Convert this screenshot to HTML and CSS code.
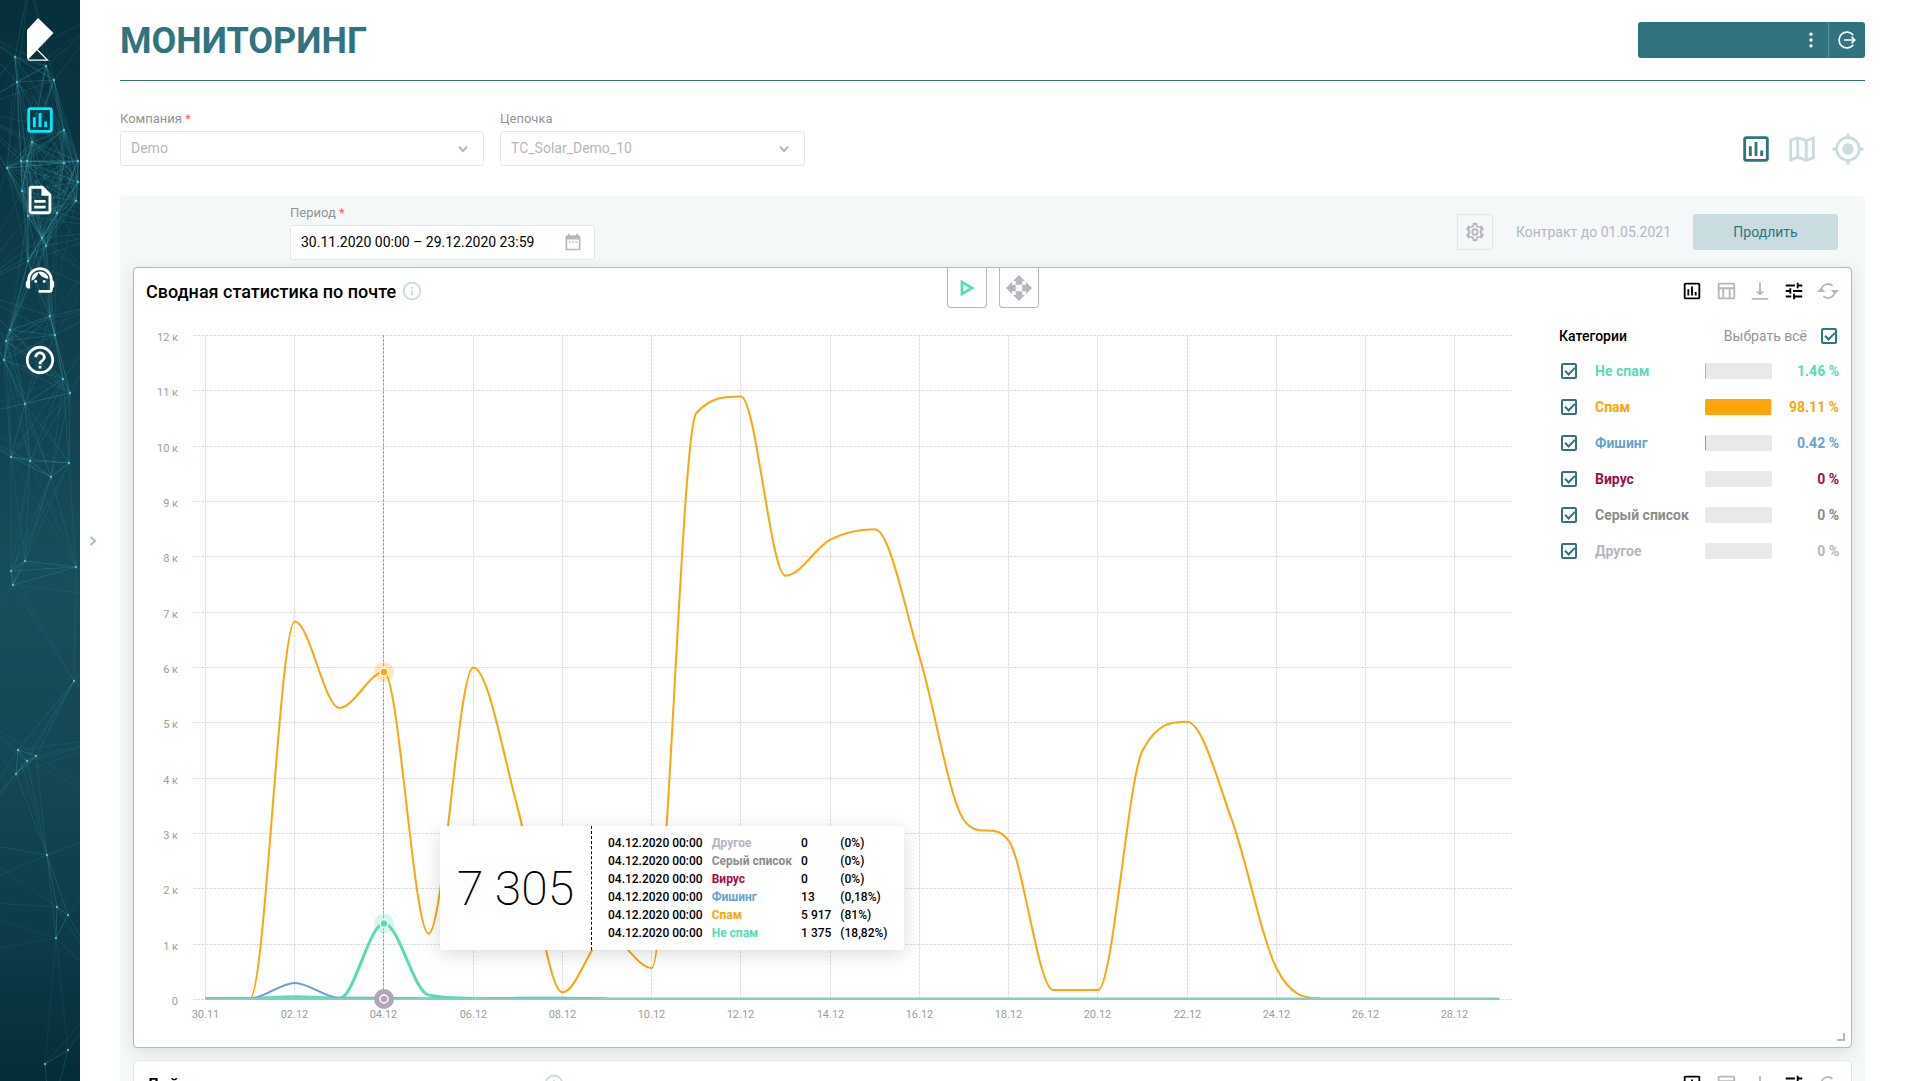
FILE: index.html
```html
<!DOCTYPE html>
<html lang="ru">
<head>
    <meta charset="UTF-8">
    <meta name="viewport" content="width=device-width, initial-scale=1.0">
    <title>Мониторинг</title>
    <link rel="stylesheet" href="styles.css">
</head>
<body>
    <!-- Icons -->
    <svg class="sprite" aria-hidden="true">
        <symbol id="i-chart" viewBox="0 0 24 24"><path d="M9 17H7v-7h2v7zm4 0h-2V7h2v10zm4 0h-2v-4h2v4zm2 2H5V5h14v14zm0-16H5c-1.100 0-2 .9-2 2v14c0 1.100.9 2 2 2h14c1.100 0 2-.9 2-2V5c0-1.100-.9-2-2-2z"/></symbol>
        <symbol id="i-doc" viewBox="0 0 24 24"><path d="M8 16h8v2H8zm0-4h8v2H8zm6-10H6c-1.100 0-2 .9-2 2v16c0 1.100.89 2 1.990 2H18c1.100 0 2-.9 2-2V8l-6-6zm4 18H6V4h7v5h5v11z"/></symbol>
        <symbol id="i-support" viewBox="0 0 24 24"><path d="M21 12.220C21 6.730 16.740 3 12 3c-4.690 0-9 3.650-9 9.280-.6.340-1 .980-1 1.720v2c0 1.100.9 2 2 2h1v-6.100c0-3.870 3.130-7 7-7s7 3.130 7 7V19h-8v2h8c1.100 0 2-.9 2-2v-1.220c.590-.310 1-.920 1-1.640v-2.300c0-.7-.410-1.310-1-1.620z"/><circle cx="9" cy="13" r="1"/><circle cx="15" cy="13" r="1"/><path d="M18 11.030A6.040 6.040 0 0 0 12.050 6c-3.030 0-6.290 2.510-6.030 6.450a8.075 8.075 0 0 0 4.860-5.890c1.310 2.630 4 4.440 7.120 4.470z"/></symbol>
        <symbol id="i-help" viewBox="0 0 24 24"><path d="M11 18h2v-2h-2v2zm1-16C6.480 2 2 6.480 2 12s4.480 10 10 10 10-4.480 10-10S17.520 2 12 2zm0 18c-4.410 0-8-3.590-8-8s3.590-8 8-8 8 3.590 8 8-3.590 8-8 8zm0-14c-2.210 0-4 1.790-4 4h2c0-1.100.9-2 2-2s2 .9 2 2c0 2-3 1.750-3 5h2c0-2.250 3-2.500 3-5 0-2.210-1.790-4-4-4z"/></symbol>
        <symbol id="i-map" viewBox="0 0 24 24"><path d="M20.500 3l-.16.030L15 5.100 9 3 3.360 4.900c-.21.070-.36.250-.36.480V20.500c0 .28.220.5.500.5l.16-.03L9 18.900l6 2.100 5.640-1.900c.21-.07.360-.25.360-.48V3.500c0-.28-.22-.5-.5-.5zM10 5.470l4 1.400v11.660l-4-1.400V5.470zm-5 .99l3-1.010v11.700l-3 1.160V6.460zm14 11.080l-3 1.010V6.860l3-1.160v11.840z"/></symbol>
        <symbol id="i-target" viewBox="0 0 24 24"><path d="M12 8c-2.210 0-4 1.790-4 4s1.790 4 4 4 4-1.790 4-4-1.790-4-4-4zm8.940 3A8.994 8.994 0 0 0 13 3.060V1h-2v2.060A8.994 8.994 0 0 0 3.060 11H1v2h2.060A8.994 8.994 0 0 0 11 20.940V23h2v-2.060A8.994 8.994 0 0 0 20.940 13H23v-2h-2.060zM12 19c-3.870 0-7-3.130-7-7s3.130-7 7-7 7 3.130 7 7-3.130 7-7 7z"/></symbol>
        <symbol id="i-more" viewBox="0 0 24 24"><circle cx="12" cy="5" r="2"/><circle cx="12" cy="12" r="2"/><circle cx="12" cy="19" r="2"/></symbol>
        <symbol id="i-exit" viewBox="0 0 24 24"><path d="M19.500 6.200A9.500 9.500 0 1 0 19.500 17.800M8.500 12H21M17.500 8.200L21.300 12l-3.800 3.800" fill="none" stroke="currentColor" stroke-width="2"/></symbol>
        <symbol id="i-down" viewBox="0 0 24 24"><path d="M5 8l7 7.500L19 8" fill="none" stroke="currentColor" stroke-width="3.500"/></symbol>
        <symbol id="i-date" viewBox="0 0 24 24"><path d="M19 4h-1V2h-2v2H8V2H6v2H5c-1.110 0-2 .9-2 2v14c0 1.100.89 2 2 2h14c1.100 0 2-.9 2-2V6c0-1.100-.9-2-2-2zm0 16H5V9h14v11zM9 13H7v-2h2v2zm4 0h-2v-2h2v2zm4 0h-2v-2h2v2z"/></symbol>
        <symbol id="i-gear" viewBox="0 0 24 24"><path d="M19.430 12.980c.04-.32.070-.64.070-.98s-.03-.66-.07-.98l2.110-1.650c.19-.15.240-.42.120-.64l-2-3.460a.5.5 0 0 0-.61-.22l-2.490 1c-.52-.4-1.080-.73-1.690-.98l-.38-2.650A.488.488 0 0 0 14 2h-4c-.25 0-.46.180-.49.420l-.38 2.650c-.61.250-1.170.59-1.690.98l-2.490-1a.5.5 0 0 0-.61.220l-2 3.460c-.13.220-.07.490.12.640l2.110 1.650c-.04.320-.07.650-.07.980s.03.660.07.980l-2.110 1.650c-.19.150-.24.420-.12.640l2 3.460a.5.5 0 0 0 .61.220l2.490-1c.52.400 1.080.73 1.690.98l.38 2.650c.03.240.24.420.49.420h4c.25 0 .46-.18.490-.42l.38-2.650c.61-.25 1.170-.59 1.690-.98l2.490 1a.5.5 0 0 0 .61-.22l2-3.460c.12-.22.070-.49-.12-.64l-2.110-1.650zM17.300 13.600l.9 1.500-1.100 1.900-1.800-.6-1.800 1.100-.5 2h-2l-.5-2-1.800-1.100-1.800.6-1.100-1.900.9-1.500v-3.200l-.9-1.500 1.100-1.900 1.800.6 1.800-1.100.5-2h2l.5 2 1.800 1.100 1.800-.6 1.100 1.900-.9 1.500zM12 8a4 4 0 1 0 0 8 4 4 0 0 0 0-8zm0 6a2 2 0 1 1 0-4 2 2 0 0 1 0 4z" fill-rule="evenodd"/></symbol>
        <symbol id="i-info" viewBox="0 0 24 24"><path d="M11 7h2v2h-2zm0 4h2v6h-2zm1-10C5.920 1 1 5.920 1 12s4.920 11 11 11 11-4.920 11-11S18.080 1 12 1zm0 20a9 9 0 1 1 0-18 9 9 0 0 1 0 18z"/></symbol>
        <symbol id="i-play" viewBox="0 0 24 24"><path d="M6.500 5.500v13l11-6.500z" fill="none" stroke="currentColor" stroke-width="3"/></symbol>
        <symbol id="i-move" viewBox="0 0 24 24"><path d="M12 0l5.500 5.500H15V9H9V5.500H6.500zM12 24l5.500-5.500H15V15H9v3.500H6.500zM0 12l5.500-5.500V9H9v6H5.500v2.500zM24 12l-5.500-5.500V9H15v6h3.500v2.500z"/></symbol>
        <symbol id="i-table" viewBox="0 0 24 24"><path d="M20 3H5c-1.100 0-2 .9-2 2v14c0 1.100.9 2 2 2h15c1.100 0 2-.9 2-2V5c0-1.100-.9-2-2-2zm0 2v3H5V5h15zm-5 14h-5v-9h5v9zM5 10h3v9H5v-9zm12 9v-9h3v9h-3z"/></symbol>
        <symbol id="i-load" viewBox="0 0 24 24"><path d="M13 12.500h3.500L12 17l-4.500-4.500H11V3h2zM3 19.500h18v2H3z"/></symbol>
        <symbol id="i-tune" viewBox="0 0 24 24"><path d="M3 17v2h6v-2H3zM3 5v2h10V5H3zm10 16v-2h8v-2h-8v-2h-2v6h2zM7 9v2H3v2h4v2h2V9H7zm14 4v-2H11v2h10zm-6-4h2V7h4V5h-4V3h-2v6z"/></symbol>
        <symbol id="i-sync" viewBox="0 0 24 24"><path d="M4.500 12A7.500 7.500 0 0 1 17 6.400M19.500 12A7.500 7.500 0 0 1 7 17.600" fill="none" stroke="currentColor" stroke-width="2"/><path d="M0 13h9L4.500 8.500zM15 11h9l-4.500 4.500z" transform="rotate(0 12 12)"/></symbol>
    </svg>

    <div class="layout">
        <aside class="sidebar">
            <svg class="network" id="network" viewBox="0 0 80 1081" preserveAspectRatio="xMidYMin slice" aria-hidden="true"></svg>
            <a class="logo" href="#" aria-label="Главная">
                <svg viewBox="0 0 27 43"><path d="M11 0L26.500 15 2 40.500H0V12z" fill="#fff"/><path d="M9.500 31L20.500 42.200H2L.7 40.500" fill="none" stroke="#fff" stroke-width="1.200"/></svg>
            </a>
            <nav class="menu">
                <a class="active" href="#" aria-label="Мониторинг"><svg><use href="#i-chart"/></svg></a>
                <a href="#" aria-label="Отчёты"><svg><use href="#i-doc"/></svg></a>
                <a href="#" aria-label="Поддержка"><svg><use href="#i-support"/></svg></a>
                <a href="#" aria-label="Помощь"><svg><use href="#i-help"/></svg></a>
            </nav>
        </aside>

        <div class="expand">
            <button type="button" aria-label="Развернуть меню">
                <svg viewBox="0 0 8 10"><path d="M1.500 1L6 5 1.500 9" fill="none" stroke="currentColor" stroke-width="2"/></svg>
            </button>
        </div>

        <main class="content">
            <header class="header">
                <h1>МОНИТОРИНГ</h1>
                <div class="user">
                    <button class="user-menu" type="button" aria-label="Меню пользователя"><svg><use href="#i-more"/></svg></button>
                    <button class="user-exit" type="button" aria-label="Выйти"><svg><use href="#i-exit"/></svg></button>
                </div>
            </header>

            <div class="filters">
                <div class="field company">
                    <label for="company">Компания <i>*</i></label>
                    <div class="control">
                        <select id="company"><option>Demo</option></select>
                        <svg class="arrow"><use href="#i-down"/></svg>
                    </div>
                </div>
                <div class="field chain">
                    <label for="chain">Цепочка</label>
                    <div class="control">
                        <select id="chain"><option>TC_Solar_Demo_10</option></select>
                        <svg class="arrow"><use href="#i-down"/></svg>
                    </div>
                </div>
                <div class="views">
                    <button class="active" type="button" aria-label="Графики"><svg><use href="#i-chart"/></svg></button>
                    <button type="button" aria-label="Карта"><svg><use href="#i-map"/></svg></button>
                    <button type="button" aria-label="Цель"><svg><use href="#i-target"/></svg></button>
                </div>
            </div>

            <section class="panel">
                <div class="toolbar">
                    <div class="field period">
                        <label for="period">Период <i>*</i></label>
                        <div class="control">
                            <input id="period" type="text" value="30.11.2020 00:00 – 29.12.2020 23:59">
                            <svg class="calendar"><use href="#i-date"/></svg>
                        </div>
                    </div>
                    <div class="contract">
                        <button class="settings" type="button" aria-label="Настройки"><svg><use href="#i-gear"/></svg></button>
                        <span>Контракт до 01.05.2021</span>
                        <button class="prolong" type="button">Продлить</button>
                    </div>
                </div>

                <article class="card selected">
                    <div class="tabs">
                        <button class="play" type="button" aria-label="Запустить"><svg><use href="#i-play"/></svg></button>
                        <button type="button" aria-label="Переместить"><svg><use href="#i-move"/></svg></button>
                    </div>
                    <div class="card-header">
                        <h2>Сводная статистика по почте</h2>
                        <svg class="info"><use href="#i-info"/></svg>
                        <div class="tools">
                            <button class="on" type="button" aria-label="График"><svg><use href="#i-chart"/></svg></button>
                            <button type="button" aria-label="Таблица"><svg><use href="#i-table"/></svg></button>
                            <button type="button" aria-label="Скачать"><svg><use href="#i-load"/></svg></button>
                            <button class="on" type="button" aria-label="Фильтры"><svg><use href="#i-tune"/></svg></button>
                            <button type="button" aria-label="Обновить"><svg><use href="#i-sync"/></svg></button>
                        </div>
                    </div>
                    <div class="card-body">
                        <div class="chart">
                            <svg id="chart" viewBox="0 0 1366 715"></svg>
                            <div class="tooltip">
                                <div class="total">7 305</div>
                                <table>
                                    <tbody>
                                        <tr><td>04.12.2020 00:00</td><td class="other">Другое</td><td>0</td><td>(0%)</td></tr>
                                        <tr><td>04.12.2020 00:00</td><td class="grey">Серый список</td><td>0</td><td>(0%)</td></tr>
                                        <tr><td>04.12.2020 00:00</td><td class="virus">Вирус</td><td>0</td><td>(0%)</td></tr>
                                        <tr><td>04.12.2020 00:00</td><td class="phishing">Фишинг</td><td>13</td><td>(0,18%)</td></tr>
                                        <tr><td>04.12.2020 00:00</td><td class="spam">Спам</td><td>5 917</td><td>(81%)</td></tr>
                                        <tr><td>04.12.2020 00:00</td><td class="ham">Не спам</td><td>1 375</td><td>(18,82%)</td></tr>
                                    </tbody>
                                </table>
                            </div>
                        </div>
                        <div class="legend">
                            <div class="legend-header">
                                <h3>Категории</h3>
                                <label for="all">Выбрать всё</label>
                                <input id="all" type="checkbox" checked>
                            </div>
                            <ul>
                                <li class="ham"><input id="c1" type="checkbox" checked><label for="c1">Не спам</label><span class="bar"><b style="width: 1.46%"></b></span><span class="value">1.46 %</span></li>
                                <li class="spam"><input id="c2" type="checkbox" checked><label for="c2">Спам</label><span class="bar"><b style="width: 98.11%"></b></span><span class="value">98.11 %</span></li>
                                <li class="phishing"><input id="c3" type="checkbox" checked><label for="c3">Фишинг</label><span class="bar"><b style="width: 0.42%"></b></span><span class="value">0.42 %</span></li>
                                <li class="virus"><input id="c4" type="checkbox" checked><label for="c4">Вирус</label><span class="bar"></span><span class="value">0 %</span></li>
                                <li class="grey"><input id="c5" type="checkbox" checked><label for="c5">Серый список</label><span class="bar"></span><span class="value">0 %</span></li>
                                <li class="other"><input id="c6" type="checkbox" checked><label for="c6">Другое</label><span class="bar"></span><span class="value">0 %</span></li>
                            </ul>
                        </div>
                    </div>
                    <span class="resize"></span>
                </article>

                <article class="card">
                    <div class="card-header">
                        <h2>Действия над письмами на этапах их анализа</h2>
                        <svg class="info"><use href="#i-info"/></svg>
                        <div class="tools">
                            <button class="on" type="button" aria-label="График"><svg><use href="#i-chart"/></svg></button>
                            <button type="button" aria-label="Таблица"><svg><use href="#i-table"/></svg></button>
                            <button type="button" aria-label="Скачать"><svg><use href="#i-load"/></svg></button>
                            <button class="on" type="button" aria-label="Фильтры"><svg><use href="#i-tune"/></svg></button>
                            <button type="button" aria-label="Обновить"><svg><use href="#i-sync"/></svg></button>
                        </div>
                    </div>
                </article>
            </section>
        </main>
    </div>

    <script src="script.js"></script>
</body>
</html>
```
FILE: styles.css
```css
* {
    box-sizing: border-box;
}

body {
    margin: 0;
    height: 100vh;
    overflow: hidden;
    font-family: Roboto, "Noto Sans", sans-serif;
    font-size: 14px;
    color: #000;
    background-color: #fff;
}

h1, h2, h3, ul {
    margin: 0;
    padding: 0;
}

button, input, select {
    font: inherit;
    color: inherit;
    margin: 0;
}

button {
    display: flex;
    align-items: center;
    justify-content: center;
    padding: 0;
    border: none;
    background: none;
    cursor: pointer;
}

svg {
    display: block;
    fill: currentColor;
}

.sprite {
    position: absolute;
    width: 0;
    height: 0;
}

.layout {
    display: flex;
    height: 100vh;
}

/* Sidebar */
.sidebar {
    position: relative;
    flex: none;
    width: 80px;
    overflow: hidden;
    color: #fff;
    background: linear-gradient(to bottom, #062f3b 0%, #0b3845 18%, #114352 38%, #184e5b 54%, #144654 72%, #0c3a47 88%, #042c37 100%);
}

.network {
    position: absolute;
    top: 0;
    left: 0;
    width: 100%;
    height: 100%;
}

.logo {
    position: relative;
    display: flex;
    justify-content: center;
    padding: 18px 0 19px;
}

.logo svg {
    width: 27px;
    height: 43px;
}

.menu {
    position: relative;
}

.menu a {
    display: flex;
    align-items: center;
    justify-content: center;
    height: 80px;
    color: #fff;
}

.menu a.active {
    color: #00eaff;
}

.menu svg {
    width: 34px;
    height: 34px;
}

.expand {
    display: flex;
    flex: none;
    align-items: center;
    width: 40px;
    padding-left: 9px;
    color: #9dc0c5;
}

.expand svg {
    width: 8px;
    height: 10px;
}

/* Header */
.content {
    flex: 1;
    min-width: 0;
    padding-right: 58px;
}

.header {
    display: flex;
    align-items: center;
    justify-content: space-between;
    height: 81px;
    border-bottom: 1px solid #31737f;
}

.header h1 {
    padding-top: 2px;
    font-size: 36px;
    line-height: 40px;
    font-weight: 700;
    color: #31737f;
}

.user {
    display: flex;
    width: 227px;
    height: 36px;
    border-radius: 3px;
    color: #fff;
    background-color: #31737f;
}

.user svg {
    width: 20px;
    height: 20px;
}

.user-menu {
    flex: 1;
    justify-content: flex-end;
    padding-right: 7px;
}

.user-exit {
    width: 37px;
    border-left: 1px solid #5a8f98;
}

/* Filters */
.filters {
    display: flex;
    gap: 16px;
    align-items: flex-end;
    padding: 30px 0;
}

.field {
    display: flex;
    flex-direction: column;
    gap: 4px;
}

.field label {
    font-size: 13px;
    line-height: 16px;
    color: #929496;
}

.field label i {
    font-style: normal;
    color: #ff5c5c;
}

.company {
    width: 364px;
}

.chain,
.period {
    width: 305px;
}

.control {
    position: relative;
}

.control select,
.control input {
    display: block;
    appearance: none;
    width: 100%;
    height: 35px;
    padding: 0 10px 1px;
    border: 1px solid #e5e6e8;
    border-radius: 3px;
    outline: none;
    background-color: #fff;
}

.control select {
    color: #b6b6be;
}

.arrow,
.calendar {
    position: absolute;
    pointer-events: none;
    color: #b6b6be;
}

.arrow {
    top: 11px;
    right: 14px;
    width: 14px;
    height: 14px;
}

.calendar {
    top: 7px;
    right: 12px;
    width: 20px;
    height: 20px;
}

.views {
    display: flex;
    gap: 12px;
    margin-left: auto;
}

.views button {
    width: 34px;
    height: 34px;
    color: #c9dcdf;
}

.views button.active {
    color: #31737f;
}

.views svg {
    width: 34px;
    height: 34px;
}

/* Panel */
.panel {
    padding: 0 13px;
    border-radius: 4px;
    background-color: #f4f8f9;
}

.toolbar {
    display: flex;
    align-items: center;
    justify-content: space-between;
    height: 71px;
    padding: 0 14px 0 157px;
}

.period {
    align-self: flex-end;
    padding-bottom: 7px;
}

.contract {
    display: flex;
    align-items: center;
    color: #b6b6be;
}

.settings {
    width: 36px;
    height: 36px;
    border: 1px solid #e5e6e8;
    border-radius: 2px;
}

.settings svg {
    width: 22px;
    height: 22px;
}

.contract span {
    margin: 0 22px 0 23px;
}

.prolong {
    width: 145px;
    height: 36px;
    border-radius: 3px;
    color: #31737f;
    background-color: #c9dcdf;
}

/* Cards */
.card {
    position: relative;
    margin-bottom: 12px;
    padding: 0 12px;
    border: 1px solid #e2e4e6;
    border-radius: 4px;
    background-color: #fff;
}

.card.selected {
    padding-bottom: 12px;
    border-color: #b5b6be;
    box-shadow: 0 4px 16px rgba(0, 0, 0, 0.1);
}

.card-header {
    display: flex;
    align-items: center;
    height: 52px;
    padding-bottom: 6px;
}

.card-header h2 {
    padding-top: 2px;
    font-size: 18px;
    line-height: 24px;
    font-weight: 500;
}

.info {
    width: 20px;
    height: 20px;
    margin-left: 6px;
    color: #c9dcdf;
}

.tools {
    display: flex;
    gap: 12px;
    margin-left: auto;
    color: #b6b6c0;
}

.tools .on {
    color: #000;
}

.tools svg {
    width: 22px;
    height: 22px;
}

.tabs {
    position: absolute;
    top: 0;
    left: 0;
    right: 0;
    display: flex;
    justify-content: center;
    gap: 12px;
}

.tabs button {
    width: 40px;
    height: 40px;
    border: 1px solid #b5b6be;
    border-top: none;
    border-radius: 0 0 4px 4px;
    color: #b5b6be;
}

.tabs svg {
    width: 26px;
    height: 26px;
}

.tabs .play {
    color: #59dbb6;
}

.tabs .play svg {
    width: 22px;
    height: 22px;
}

.card-body {
    display: flex;
    gap: 47px;
}

.resize {
    position: absolute;
    right: 6px;
    bottom: 6px;
    width: 8px;
    height: 8px;
    border-right: 2px solid #b5b6be;
    border-bottom: 2px solid #b5b6be;
}

/* Chart */
.chart {
    position: relative;
    flex: 1;
    min-width: 0;
}

#chart {
    width: 100%;
    height: auto;
    overflow: visible;
}

#chart text {
    font-size: 11px;
    fill: #9c9ea0;
}

#chart .x-label {
    text-anchor: middle;
}

#chart .y-label {
    text-anchor: end;
}

.grid {
    stroke: #dcdee2;
    stroke-dasharray: 3 1;
}

.cursor {
    stroke: #a3a4ab;
    stroke-dasharray: 3 1;
}

.tooltip {
    position: absolute;
    top: 506px;
    left: 294px;
    display: flex;
    height: 124px;
    border-radius: 4px;
    background-color: #fff;
    box-shadow: 0 4px 20px rgba(0, 0, 0, 0.15);
}

.total {
    display: flex;
    align-items: center;
    justify-content: center;
    width: 152px;
    font-size: 48px;
    font-weight: 200;
    border-right: 1px dashed #000;
}

.tooltip table {
    align-self: center;
    margin: 0 16px;
    border-collapse: collapse;
    font-size: 12px;
    line-height: 18px;
    font-weight: 500;
    white-space: nowrap;
}

.tooltip td {
    padding: 0 9px 0 0;
}

.tooltip td:last-child {
    padding-right: 0;
}

.tooltip td[class] {
    font-weight: 700;
}

/* Legend */
.legend {
    width: 280px;
    flex: none;
}

.legend-header {
    display: flex;
    align-items: center;
    height: 32px;
    margin-bottom: 1px;
    padding-right: 2px;
}

.legend h3 {
    flex: 1;
    font-size: 14px;
    font-weight: 500;
}

.legend-header label {
    margin-right: 14px;
    color: #929496;
}

.legend ul {
    list-style: none;
}

.legend li {
    display: flex;
    align-items: center;
    height: 36px;
    padding-left: 2px;
    font-weight: 700;
}

.legend li label {
    flex: 1;
    margin-left: 18px;
}

.legend input {
    appearance: none;
    position: relative;
    width: 16px;
    height: 16px;
    border: 2px solid #31737f;
    border-radius: 2px;
    background-color: #fff;
}

.legend input:checked::after {
    content: "";
    position: absolute;
    top: 2px;
    left: 2px;
    width: 8px;
    height: 4px;
    border-left: 2px solid #31737f;
    border-bottom: 2px solid #31737f;
    transform: rotate(-45deg);
}

.bar {
    width: 67px;
    height: 16px;
    border-radius: 2px;
    overflow: hidden;
    background-color: #e8e9ea;
}

.bar b {
    display: block;
    min-width: 1px;
    height: 100%;
    background-color: currentColor;
}

.value {
    width: 67px;
    text-align: right;
}

.ham { color: #59dbb6; }
.spam { color: #ffa409; }
.phishing { color: #69a2ce; }
.virus { color: #98114f; }
.grey { color: #8c8c8c; }
.other { color: #b6b6c0; }
```
FILE: script.js
```js
const NS = 'http://www.w3.org/2000/svg';

function add(parent, name, attrs, text) {
    const el = document.createElementNS(NS, name);
    for (const key in attrs) el.setAttribute(key, attrs[key]);
    if (text) el.textContent = text;
    parent.appendChild(el);
    return el;
}

// Chart
const chart = document.getElementById('chart');
const left = 59.5;
const bottom = 679.5;
const dayWidth = 44.62;
const px = day => left + day * dayWidth;
const py = value => bottom - value * 55.33;

for (let k = 0; k <= 12; k++) {
    const y = Math.floor(py(k)) + 0.5;
    add(chart, 'line', { class: 'grid', x1: 47, x2: 1366, y1: y, y2: y });
    add(chart, 'text', { class: 'y-label', x: 32, y: y + 5 }, k ? k + ' к' : '0');
}

for (let day = 0; day <= 28; day += 2) {
    const x = Math.floor(px(day)) + 0.5;
    const label = day ? String(day).padStart(2, '0') + '.12' : '30.11';
    add(chart, 'line', { class: day === 4 ? 'cursor' : 'grid', x1: x, x2: x, y1: 15, y2: 679 });
    add(chart, 'text', { class: 'x-label', x: x, y: 698 }, label);
}

// Monotone cubic curve through one value per day
function curve(values) {
    const d = values.slice(1).map((v, i) => v - values[i]);
    const m = values.map((v, i) => {
        if (i === 0 || i === values.length - 1) return 0;
        const a = d[i - 1];
        const b = d[i];
        if (a * b <= 0) return 0;
        return Math.sign(a) * Math.min(Math.abs(a) * 3, Math.abs(b) * 3, Math.abs(a + b) / 2);
    });
    let path = 'M' + px(0) + ' ' + py(values[0]);
    for (let i = 1; i < values.length; i++) {
        path += 'C' + [
            px(i - 2 / 3), py(values[i - 1] + m[i - 1] / 3),
            px(i - 1 / 3), py(values[i] - m[i] / 3),
            px(i), py(values[i])
        ].join(' ');
    }
    return path;
}

function fill(values) {
    const result = new Array(30).fill(0.02);
    values.forEach((v, i) => { result[i] = v; });
    return result;
}

const series = [
    { color: '#ffa409', width: 2, values: [0.02, 0.02, 6.83, 5.27, 5.917, 1.19, 6, 3.45, 0.13, 1.17, 0.57, 10.6, 10.9, 7.66, 8.31, 8.5, 6.2, 3.24, 2.87, 0.17, 0.17, 4.5, 5.02, 3.25, 0.57], until: 26 },
    { color: '#59dbb6', width: 3, values: [0.02, 0.02, 0.05, 0.02, 1.375, 0.08], until: 7 },
    { color: '#69a2ce', width: 2, values: [0.02, 0.02, 0.3, 0.03, 0.03, 0.02, 0.02, 0.03, 0.03], until: 10 },
    { color: '#7fcfc4', width: 2, values: [] }
];

series.forEach(s => {
    const values = fill(s.values).slice(0, s.until);
    add(chart, 'path', { d: curve(values), fill: 'none', stroke: s.color, 'stroke-width': s.width });
});
add(chart, 'line', { x1: px(0), x2: px(29), y1: 679.5, y2: 679.5, stroke: '#b6b6c0' });

function marker(y, halo, dot) {
    add(chart, 'circle', { cx: px(4), cy: y, r: 10, fill: halo });
    add(chart, 'circle', { cx: px(4), cy: y, r: 4, fill: dot, stroke: '#fff', 'stroke-width': 1.5 });
}

marker(py(5.917), 'rgba(255, 164, 9, 0.25)', '#ffa409');
marker(py(1.375), 'rgba(89, 219, 182, 0.25)', '#59dbb6');
marker(679, '#b3a5b9', '#b3a5b9');

// Sidebar network
const network = document.getElementById('network');
const nodes = [
    [15, 57], [17, 82], [54, 80], [46, 66], [64, 130], [32, 142], [21, 161], [27, 161], [7, 168],
    [78, 161], [64, 163], [22, 191], [78, 182], [57, 213], [28, 216], [76, 201], [42, 238], [46, 246],
    [28, 261], [50, 316], [10, 330], [6, 341], [55, 335], [4, 360], [63, 379], [70, 393], [25, 404],
    [11, 457], [30, 461], [51, 477], [69, 463], [25, 561], [11, 571], [13, 585], [76, 567], [74, 681],
    [18, 750], [36, 756], [27, 761], [16, 774], [47, 855], [57, 907], [68, 915], [56, 938], [68, 1050],
    [45, 1064],
    // beyond the edges
    [-40, 20], [110, 10], [30, -20], [-30, 110], [120, 230], [-30, 290], [120, 300], [-50, 420],
    [140, 600], [-60, 690], [-40, 840], [130, 735], [-60, 900], [140, 820], [-70, 960], [110, 990], [50, 1120]
];

nodes.forEach((a, i) => {
    nodes.slice(i + 1).forEach(b => {
        const dist = Math.hypot(a[0] - b[0], a[1] - b[1]);
        if (dist < 128) {
            add(network, 'line', {
                x1: a[0], y1: a[1], x2: b[0], y2: b[1],
                stroke: '#4fb3bf', 'stroke-width': 0.8, opacity: (0.4 - dist / 420).toFixed(2)
            });
        }
    });
    add(network, 'circle', { cx: a[0], cy: a[1], r: 1.2, fill: '#5fd0e6', opacity: 0.8 });
});
```
